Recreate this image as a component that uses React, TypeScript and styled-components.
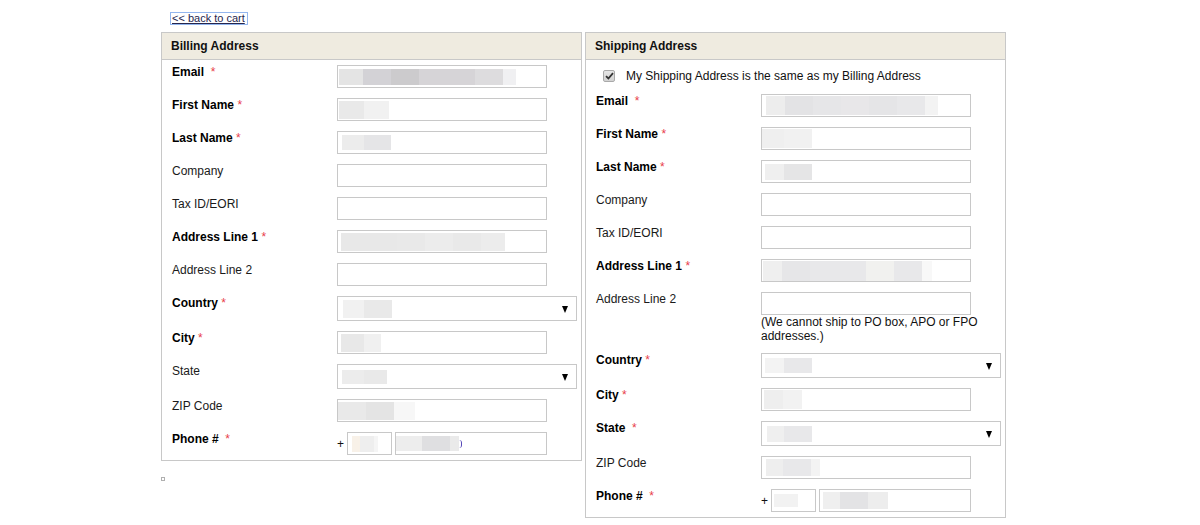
import React from "react";
import styled, { createGlobalStyle } from "styled-components";

const Global = createGlobalStyle`
  html, body { margin: 0; padding: 0; background: #fff; }
  body { font-family: "Liberation Sans", Arial, sans-serif; font-size: 12px; color: #111; }
`;

const Page = styled.div`
  padding: 11px 0 0 161px;
`;

const BackLink = styled.a`
  display: inline-block;
  margin-left: 10px;
  padding: 0 2px 0 1px;
  font-size: 11px;
  line-height: 11px;
  color: #26264e;
  text-decoration: underline;
  outline: 1px solid #93b6ee;
  cursor: pointer;
`;

const Columns = styled.div`
  display: flex;
  align-items: flex-start;
  gap: 3px;
  margin-top: 7px;
`;

const LeftCol = styled.div`
  display: flex;
  flex-direction: column;
  align-items: flex-start;
`;

const Panel = styled.section`
  width: 421px;
  box-sizing: border-box;
  border: 1px solid #c8c8c8;
`;

const PanelHeader = styled.h2`
  margin: 0;
  height: 26px;
  line-height: 26px;
  padding: 0 9px;
  background: #efebe0;
  border-bottom: 1px solid #c8c8c8;
  font-size: 12px;
  font-weight: bold;
  color: #111;
`;

const PanelBody = styled.div`
  padding: 5px 0 5px 10px;
`;

const Row = styled.div`
  display: grid;
  grid-template-columns: 165px 240px;
  margin-bottom: 10px;
  &:last-child { margin-bottom: 0; }
`;

const Label = styled.label<{ $bold?: boolean }>`
  line-height: 14px;
  font-size: 12px;
  font-weight: ${(p) => (p.$bold ? "bold" : "normal")};
  color: ${(p) => (p.$bold ? "#000" : "#1a1a1a")};
  white-space: pre;
`;

const Req = styled.span`
  color: #e8404a;
  font-weight: normal;
`;

const FieldCell = styled.div`
  display: flex;
  flex-direction: column;
  align-items: flex-start;
`;

const Box = styled.div<{ $w: number; $h: number; $pad: number }>`
  position: relative;
  box-sizing: border-box;
  width: ${(p) => p.$w}px;
  height: ${(p) => p.$h}px;
  border: 1px solid #c8c8c8;
  background: #fff;
  display: flex;
  align-items: center;
  padding-left: ${(p) => p.$pad}px;
`;

const Arrow = styled.span`
  position: absolute;
  right: 8px;
  top: 50%;
  margin-top: -3px;
  width: 0;
  height: 0;
  border-left: 3px solid transparent;
  border-right: 3px solid transparent;
  border-top: 7px solid #000;
`;

const Mosaic = styled.span<{ $h: number }>`
  display: flex;
  align-items: center;
  height: ${(p) => p.$h}px;
`;

const Cell = styled.span<{ $w: number; $c: string }>`
  display: block;
  width: ${(p) => p.$w}px;
  height: 100%;
  background: ${(p) => p.$c};
`;

const Paren = styled.span`
  display: block;
  width: 2px;
  height: 8px;
  border-right: 1px solid #5548b8;
  border-radius: 0 4px 4px 0;
`;

const Note = styled.div`
  width: 240px;
  line-height: 14px;
  font-size: 12px;
  color: #111;
`;

const PhoneGroup = styled.div`
  display: flex;
  align-items: center;
  height: 23px;
`;

const Plus = styled.span`
  width: 10px;
  font-size: 12px;
  color: #111;
`;

const PhoneGap = styled.span`
  width: 3px;
`;

const CheckRow = styled.label`
  display: flex;
  align-items: center;
  height: 22px;
  padding-left: 7px;
  margin-bottom: 7px;
  font-size: 12px;
  color: #111;
`;

const FakeCheck = styled.span`
  box-sizing: border-box;
  width: 12px;
  height: 12px;
  margin-right: 11px;
  border: 1px solid #a9a9a9;
  border-radius: 2px;
  background: linear-gradient(#e6e6e6, #d2d2d2);
  display: flex;
  align-items: center;
  justify-content: center;
`;

const Broken = styled.span`
  display: block;
  box-sizing: border-box;
  width: 4px;
  height: 4px;
  margin-top: 16px;
  border: 1px solid #b0b0b0;
`;

type Blur = { x: number; h: number; cells: [number, string][]; paren?: boolean };

const MosaicView = ({ b }: { b?: Blur }) =>
  b ? (
    <Mosaic $h={b.h}>
      {b.cells.map(([w, c], i) => (
        <Cell key={i} $w={w} $c={c} />
      ))}
      {b.paren && <Paren />}
    </Mosaic>
  ) : null;

type Field = {
  label: string;
  bold?: boolean;
  req?: string;
  kind?: "text" | "select" | "phone";
  blur?: Blur;
  blur2?: Blur;
  note?: string;
};

const FieldRow = ({ f }: { f: Field }) => {
  let control: React.ReactNode;
  if (f.kind === "select") {
    control = (
      <Box $w={240} $h={25} $pad={f.blur ? f.blur.x : 0}>
        <MosaicView b={f.blur} />
        <Arrow />
      </Box>
    );
  } else if (f.kind === "phone") {
    control = (
      <PhoneGroup>
        <Plus>+</Plus>
        <Box $w={45} $h={23} $pad={f.blur ? f.blur.x : 0}>
          <MosaicView b={f.blur} />
        </Box>
        <PhoneGap />
        <Box $w={152} $h={23} $pad={f.blur2 ? f.blur2.x : 0}>
          <MosaicView b={f.blur2} />
        </Box>
      </PhoneGroup>
    );
  } else {
    control = (
      <Box $w={210} $h={23} $pad={f.blur ? f.blur.x : 0}>
        <MosaicView b={f.blur} />
      </Box>
    );
  }
  return (
    <Row>
      <Label $bold={f.bold}>
        {f.label}
        {f.req !== undefined && <Req>{f.req}*</Req>}
      </Label>
      <FieldCell>
        {control}
        {f.note && <Note>{f.note}</Note>}
      </FieldCell>
    </Row>
  );
};

const billing: Field[] = [
  { label: "Email", bold: true, req: "\u00a0\u00a0", blur: { x: 1, h: 16, cells: [[24, "#e4e4e4"], [28, "#d3d2d6"], [28, "#cccbcd"], [56, "#d6d4d7"], [28, "#dddcde"], [13, "#f0f0f2"]] } },
  { label: "First Name", bold: true, req: " ", blur: { x: 1, h: 18, cells: [[25, "#e9e9e9"], [25, "#f1f1f1"]] } },
  { label: "Last Name", bold: true, req: " ", blur: { x: 4, h: 15, cells: [[22, "#ececec"], [27, "#e5e5e7"]] } },
  { label: "Company" },
  { label: "Tax ID/EORI" },
  { label: "Address Line 1", bold: true, req: " ", blur: { x: 3, h: 18, cells: [[56, "#e8e8e8"], [28, "#e9e9e9"], [28, "#ececec"], [28, "#e9e9e9"], [24, "#ececec"]] } },
  { label: "Address Line 2" },
  { label: "Country", bold: true, req: " ", kind: "select", blur: { x: 5, h: 18, cells: [[21, "#f1f1f1"], [28, "#e9e9e9"]] } },
  { label: "City", bold: true, req: " ", blur: { x: 3, h: 18, cells: [[23, "#e8e8e8"], [17, "#f0f0f0"]] } },
  { label: "State", kind: "select", blur: { x: 4, h: 14, cells: [[22, "#ececec"], [23, "#e9e9e9"]] } },
  { label: "ZIP Code", blur: { x: 0, h: 18, cells: [[28, "#e9e9e9"], [28, "#e4e4e4"], [21, "#f7f7f7"]] } },
  {
    label: "Phone #",
    bold: true,
    req: "\u00a0\u00a0",
    kind: "phone",
    blur: { x: 4, h: 16, cells: [[8, "#f8f1e8"], [14, "#eeeeee"], [4, "#f5f5f5"]] },
    blur2: { x: 0, h: 15, cells: [[26, "#ededed"], [28, "#dfdfe1"], [9, "#eaeaea"]], paren: true },
  },
];

const shipping: Field[] = [
  { label: "Email", bold: true, req: "\u00a0\u00a0", blur: { x: 4, h: 19, cells: [[19, "#ededed"], [28, "#e3e3e5"], [28, "#e6e6e8"], [28, "#e8e7e9"], [28, "#e5e5e7"], [28, "#e8e8ea"], [13, "#f3f3f3"]] } },
  { label: "First Name", bold: true, req: " ", blur: { x: 0, h: 19, cells: [[22, "#efefef"], [28, "#f1f1f1"]] } },
  { label: "Last Name", bold: true, req: " ", blur: { x: 3, h: 16, cells: [[19, "#efefef"], [28, "#e5e5e6"]] } },
  { label: "Company" },
  { label: "Tax ID/EORI" },
  { label: "Address Line 1", bold: true, req: " ", blur: { x: 1, h: 20, cells: [[19, "#efefef"], [28, "#e6e6e8"], [56, "#e8e8ea"], [28, "#f1f1ef"], [28, "#e8e8ea"], [10, "#f8f8f8"]] } },
  { label: "Address Line 2", note: "(We cannot ship to PO box, APO or FPO addresses.)" },
  { label: "Country", bold: true, req: " ", kind: "select", blur: { x: 3, h: 15, cells: [[19, "#f3f3f3"], [28, "#e8e8ea"]] } },
  { label: "City", bold: true, req: " ", blur: { x: 2, h: 19, cells: [[19, "#eeeeee"], [19, "#f2f2f2"]] } },
  { label: "State", bold: true, req: "\u00a0\u00a0", kind: "select", blur: { x: 5, h: 16, cells: [[17, "#efefef"], [28, "#e8e8ea"]] } },
  { label: "ZIP Code", blur: { x: 4, h: 17, cells: [[17, "#eeeeee"], [28, "#e8e8ea"], [9, "#f3f3f3"]] } },
  {
    label: "Phone #",
    bold: true,
    req: "\u00a0\u00a0",
    kind: "phone",
    blur: { x: 2, h: 13, cells: [[24, "#f2f2f2"]] },
    blur2: { x: 3, h: 17, cells: [[17, "#efefef"], [28, "#e3e3e5"], [20, "#ededed"]] },
  },
];

export default function App() {
  return (
    <>
      <Global />
      <Page>
        <BackLink>&lt;&lt; back to cart</BackLink>
        <Columns>
          <LeftCol>
            <Panel>
              <PanelHeader>Billing Address</PanelHeader>
              <PanelBody>
                {billing.map((f, i) => (
                  <FieldRow key={i} f={f} />
                ))}
              </PanelBody>
            </Panel>
            <Broken />
          </LeftCol>
          <Panel>
            <PanelHeader>Shipping Address</PanelHeader>
            <PanelBody>
              <CheckRow>
                <FakeCheck>
                  <svg width="9" height="8" viewBox="0 0 9 8">
                    <path d="M1 4.2 L3.4 6.5 L8 1.2" fill="none" stroke="#333" strokeWidth="1.8" />
                  </svg>
                </FakeCheck>
                My Shipping Address is the same as my Billing Address
              </CheckRow>
              {shipping.map((f, i) => (
                <FieldRow key={i} f={f} />
              ))}
            </PanelBody>
          </Panel>
        </Columns>
      </Page>
    </>
  );
}
